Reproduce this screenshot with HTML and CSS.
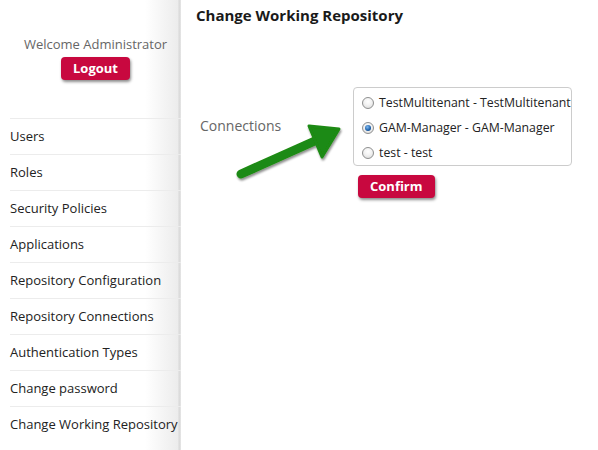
FILE: index.html
```html
<!DOCTYPE html>
<html>
<head>
<meta charset="utf-8">
<link rel="stylesheet" href="styles.css">
</head>
<body>
<div class="page">
  <aside class="sidebar">
    <div class="welcome">Welcome Administrator</div>
    <div class="logout-wrap"><button class="btn">Logout</button></div>
    <ul class="menu">
      <li>Users</li>
      <li>Roles</li>
      <li>Security Policies</li>
      <li>Applications</li>
      <li>Repository Configuration</li>
      <li>Repository Connections</li>
      <li>Authentication Types</li>
      <li>Change password</li>
      <li>Change Working Repository</li>
    </ul>
  </aside>
  <main class="content">
    <h1 class="title">Change Working Repository</h1>
    <div class="form-row">
      <div class="label">Connections</div>
      <div class="field">
        <div class="radio-box">
          <label class="opt"><input type="radio" name="c"><span>TestMultitenant - TestMultitenant</span></label>
          <label class="opt"><input type="radio" name="c" checked><span>GAM-Manager - GAM-Manager</span></label>
          <label class="opt"><input type="radio" name="c"><span>test - test</span></label>
        </div>
        <button class="btn confirm">Confirm</button>
      </div>
    </div>
    <svg class="arrow" width="120" height="70" viewBox="0 0 120 70">
      <defs>
        <filter id="sh" x="-20%" y="-20%" width="140%" height="140%">
          <feDropShadow dx="1" dy="2" stdDeviation="1.2" flood-color="#000" flood-opacity="0.45"/>
        </filter>
      </defs>
      <g filter="url(#sh)">
        <line x1="12" y1="58" x2="88" y2="24" stroke="#1f8a12" stroke-width="9" stroke-linecap="round"/>
        <polygon points="110,13 80,10 93,41" fill="#1f8a12" stroke="#1f8a12" stroke-width="3" stroke-linejoin="round"/>
      </g>
    </svg>
  </main>
</div>
</body>
</html>
```
FILE: styles.css
```css
* { box-sizing: border-box; }
html, body { margin: 0; padding: 0; background: #fff; }
body { font-family: "Open Sans", "DejaVu Sans", sans-serif; font-size: 13px; color: #333; }
.page { display: flex; height: 450px; }
.sidebar {
  width: 181px;
  flex: none;
  background: linear-gradient(to right, #fff 0, #fff 145px, #ececec 178px, #d8d8d8 179px, #e6e6e6 181px);
  padding-top: 35px;
}
.welcome { text-align: center; color: #666; font-size: 13px; line-height: 18px; padding-left: 10px; }
.logout-wrap { text-align: center; padding-left: 10px; margin-top: 4px; }
.btn {
  font-family: "Open Sans", "DejaVu Sans", sans-serif;
  background: #c8083f;
  color: #fff;
  font-weight: bold;
  font-size: 13px;
  border: none;
  border-radius: 4px;
  height: 23px;
  padding: 0 12px;
  box-shadow: 1px 2px 3px rgba(0,0,0,0.45);
  line-height: 23px;
}
.menu { list-style: none; margin: 38px 0 0 10px; padding: 0; }
.menu li {
  border-top: 1px solid #ececec;
  height: 36px;
  line-height: 35px;
  color: #222;
  font-size: 13px;
  white-space: nowrap;
}
.content { position: relative; flex: 1; padding-left: 15px; }
.title { margin: 0; padding-top: 5px; font-size: 15px; font-weight: bold; color: #1a1a1a; line-height: 20px; }
.form-row { display: flex; margin-top: 62px; }
.label { width: 157px; padding-left: 4px; padding-top: 29px; color: #666; font-size: 14px; }
.radio-box {
  width: 219px;
  border: 1px solid #ccc;
  border-radius: 4px;
  padding: 2px 0 0 8px;
}
.opt { display: flex; align-items: center; height: 25px; color: #222; font-size: 12.3px; white-space: nowrap; }
.opt input {
  appearance: none;
  -webkit-appearance: none;
  flex: none;
  width: 12px; height: 12px;
  margin: 0 5px 0 0;
  border-radius: 50%;
  border: 1px solid #8e8f8f;
  background: radial-gradient(circle at 50% 35%, #fff 0, #f2f2f2 45%, #d6d6d6 100%);
  position: relative;
}
.opt input:checked::after {
  content: "";
  position: absolute;
  left: 2px; top: 2px;
  width: 6px; height: 6px;
  border-radius: 50%;
  background: radial-gradient(circle at 40% 35%, #7fb9f0 0, #1c5fa8 60%, #0b3c78 100%);
}
.confirm { margin-top: 9px; margin-left: 5px; padding: 0 12px; }
.arrow { position: absolute; left: 48px; top: 116px; }
```
